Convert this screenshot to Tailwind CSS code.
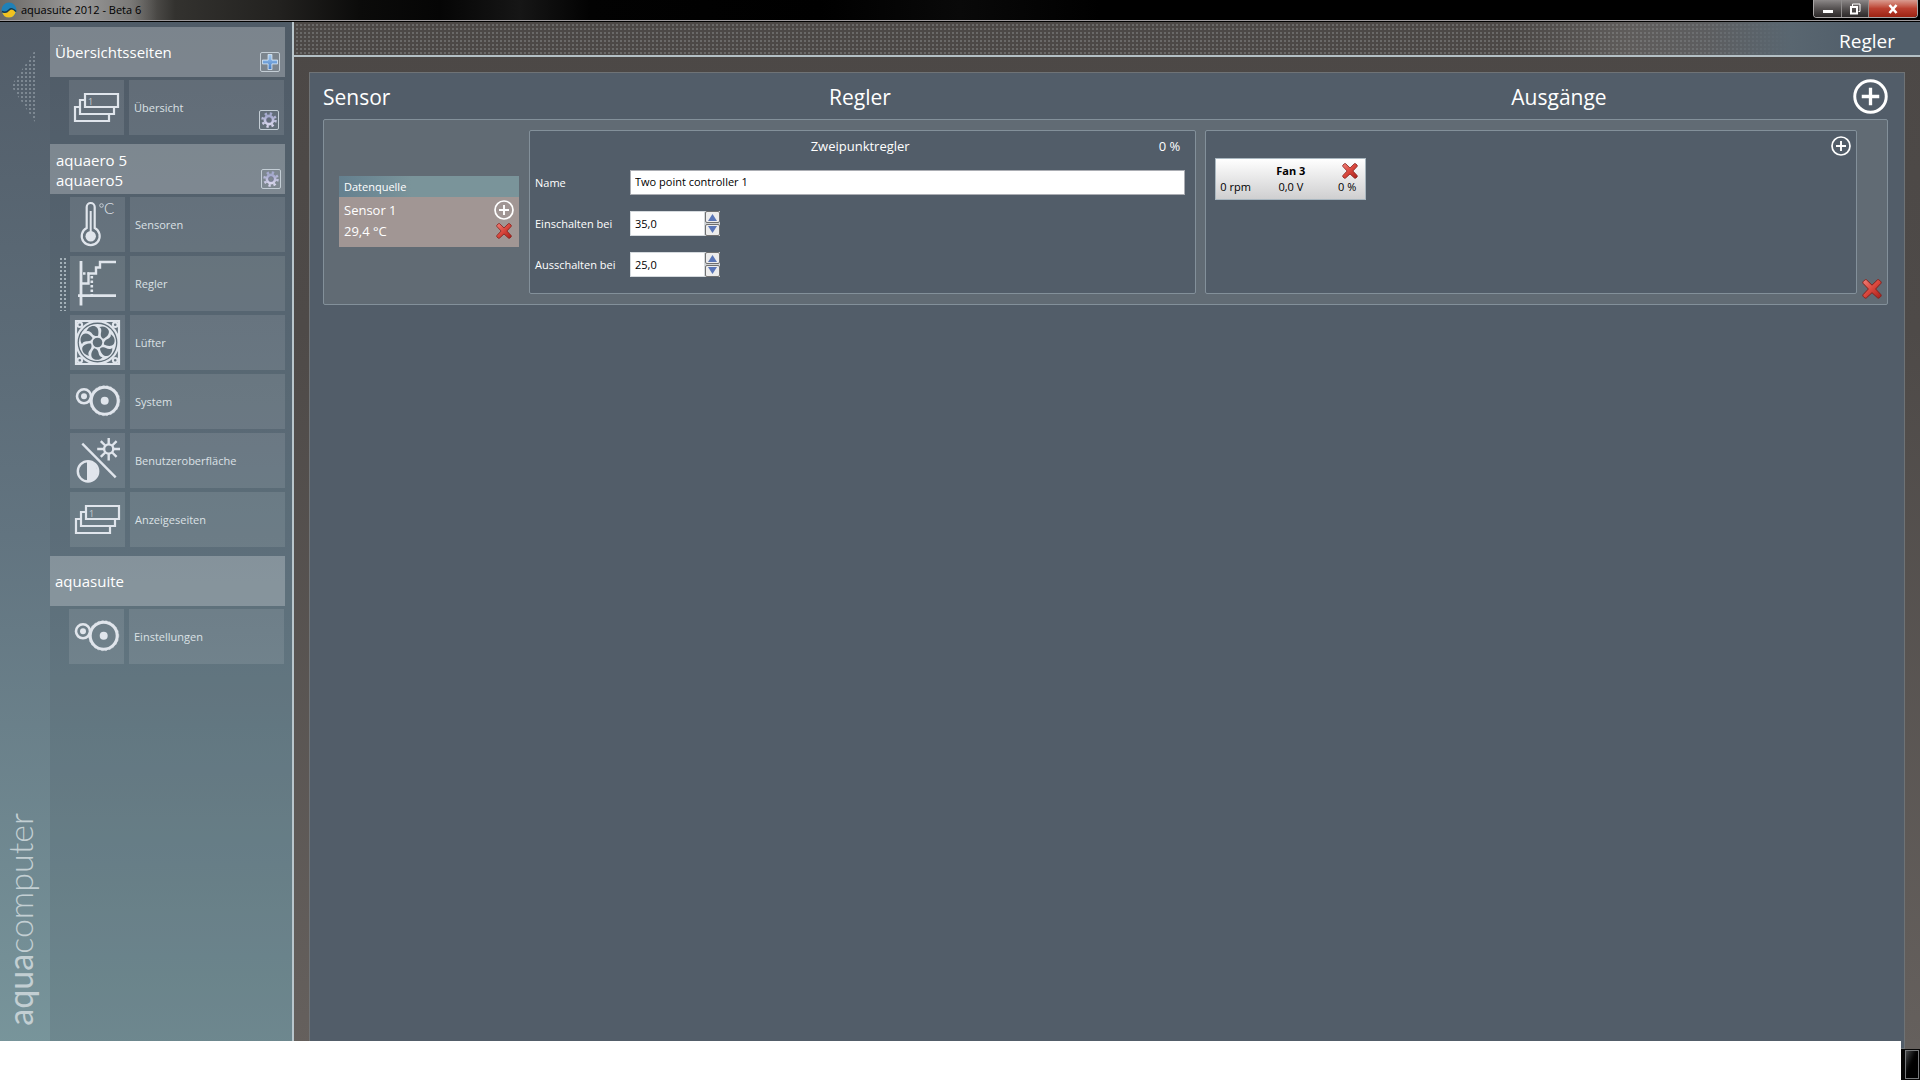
<!DOCTYPE html>
<html lang="de">
<head>
<meta charset="utf-8">
<meta name="viewport" content="width=device-width, initial-scale=1">
<title>aquasuite 2012 - Beta 6</title>
<script src="https://cdn.jsdelivr.net/npm/@tailwindcss/browser@4"></script>
</head>
<body class="relative flex min-h-screen flex-col bg-black font-['Open_Sans','Noto_Sans',sans-serif] text-[11px] leading-4 text-white">

<!-- shared symbols -->
<svg class="absolute size-0" aria-hidden="true">
  <defs>
    <pattern id="dots-bar" width="4" height="4" patternUnits="userSpaceOnUse"><rect x="2" y="2" width="2" height="2" fill="#6a6968"/></pattern>
    <pattern id="dots-arrow" width="4" height="4" patternUnits="userSpaceOnUse"><rect x="2" y="2" width="2" height="2" fill="#7d8892"/></pattern>
    <pattern id="dots-mark" width="4" height="4" patternUnits="userSpaceOnUse"><rect x="0" y="0" width="2" height="2" fill="#a3b0b8"/></pattern>
    <linearGradient id="red" x1="0" y1="0" x2="1" y2="1"><stop offset="0" stop-color="#f08078"/><stop offset=".5" stop-color="#d8463c"/><stop offset="1" stop-color="#a81f1a"/></linearGradient>
    <linearGradient id="blue" x1="0" y1="0" x2="0" y2="1"><stop offset="0" stop-color="#a5ccf2"/><stop offset="1" stop-color="#4179c2"/></linearGradient>
    <linearGradient id="steel" x1="0" y1="0" x2="0" y2="1"><stop offset="0" stop-color="#a3a8cc"/><stop offset="1" stop-color="#d5d3ea"/></linearGradient>
    <symbol id="cross" viewBox="0 0 20 20"><path d="M4.500 .8 10 6.200 15.500 .8Q16.500 .3 17.400 1.200L18.800 2.600Q19.600 3.600 18.800 4.500L13.600 10 18.800 15.500Q19.600 16.400 18.800 17.400L17.400 18.800Q16.500 19.600 15.500 18.800L10 13.700 4.500 18.800Q3.500 19.600 2.600 18.800L1.200 17.400Q.4 16.400 1.200 15.500L6.400 10 1.200 4.500Q.4 3.600 1.200 2.600L2.600 1.200Q3.500 .3 4.500 .8Z" fill="url(#red)" stroke="#84201c" stroke-width="1"/></symbol>
    <symbol id="add" viewBox="0 0 20 20"><circle cx="10" cy="10" r="9" fill="none" stroke="#fff" stroke-width="1.700"/><path d="M10 5v10M5 10h10" stroke="#fff" stroke-width="1.900"/></symbol>
    <symbol id="plus" viewBox="0 0 20 20"><path d="M7.600 .5h4.800v7.100h7.100v4.800h-7.100v7.100H7.600v-7.100H.5V7.600h7.100z" fill="url(#blue)" stroke="#e3f0fb" stroke-width="1"/></symbol>
    <symbol id="gear" viewBox="0 0 20 20"><g fill="none" stroke="url(#steel)"><circle cx="10" cy="10" r="5" stroke-width="3.600"/><circle cx="10" cy="10" r="8.100" stroke-width="3.200" stroke-dasharray="2.900 3.461"/></g><circle cx="10" cy="10" r="3.200" fill="none" stroke="#6d7090" stroke-width=".7"/></symbol>
    <symbol id="pages" viewBox="0 0 55 55"><path d="M15 20h-4v14h34v-6M10 27H6v14h34v-7M16 14h33v13H16z" fill="none" stroke="#e0e5ec" stroke-width="2.200"/><text x="19" y="25" font-size="9" fill="#c3cad1">1</text></symbol>
    <symbol id="wheels" viewBox="0 0 55 55"><g fill="none" stroke="#e0e5ec"><circle cx="34.700" cy="26.700" r="13.500" stroke-width="3"/><circle cx="14" cy="22.300" r="7" stroke-width="2.600"/><circle cx="34.700" cy="26.700" r="15" stroke-width=".6" stroke-dasharray="2 2"/></g><g fill="#e0e5ec"><circle cx="34.700" cy="26.700" r="4"/><circle cx="14" cy="22.300" r="3"/></g></symbol>
  </defs>
</svg>

<!-- title bar -->
<header class="flex h-[22px] items-start border-b border-black bg-[linear-gradient(90deg,#6b6966_0,#6b6966_130px,#33322f_175px,#22211f_280px,#0b0b0a_360px,#050505_440px,#161616_520px,#020202_590px,#000_820px,#090909_960px,#000_1100px,#000_100%)]">
  <div class="flex h-[21px] flex-1 items-center border-b border-[#9c999c]">
    <div class="flex h-[20px] items-center gap-1 bg-linear-to-r from-transparent via-[#9a9a9a] via-50% to-transparent pr-4 pl-px">
      <svg class="size-4" viewBox="0 0 16 16" aria-hidden="true"><circle cx="8" cy="8" r="7.500" fill="#1f81b8"/><path d="M1 10Q4 12.500 8 8.500 11 5.500 14.800 10 13 15.500 8 15.500 2.500 15.500 1 10Z" fill="#f2c21f"/><path d="M1 9.500Q5 11.500 8 8 11 5 15 9.500" fill="none" stroke="#17384a" stroke-width="1.500"/></svg>
      <h1 class="text-[11px] text-black">aquasuite 2012 - Beta 6</h1>
    </div>
    <div class="mr-[2px] ml-auto flex h-[18px] self-start overflow-hidden rounded-b border border-t-0 border-[#a9a6a6] text-white">
      <button aria-label="Minimieren" class="flex w-7 items-center justify-center border-r border-[#8f8c8c] bg-linear-to-b from-[#8c8888] via-[#565252] via-50% to-[#2c2929]"><svg class="size-3" viewBox="0 0 12 12"><path d="M1 7h10v3H1z" fill="#fff"/></svg></button>
      <button aria-label="Wiederherstellen" class="flex w-[27px] items-center justify-center border-r border-[#8f8c8c] bg-linear-to-b from-[#8c8888] via-[#565252] via-50% to-[#2c2929]"><svg class="size-3" viewBox="0 0 12 12" fill="none" stroke="#fff"><path d="M3.500 3V1h7.500v7.500H9.500"/><path d="M2 4h6v6.500H2z" stroke-width="2"/></svg></button>
      <button aria-label="Schließen" class="flex w-[48px] items-center justify-center bg-linear-to-b from-[#d99b90] via-[#bb4030] via-50% to-[#9c2312]"><svg class="size-3" viewBox="0 0 12 12"><path d="M2.500 2 9.500 10M9.500 2 2.500 10" stroke="#fff" stroke-width="2.600"/></svg></button>
    </div>
  </div>
</header>

<div class="flex flex-1">
  <!-- side bar -->
  <aside class="flex w-[294px] shrink-0 border-r-2 border-[#b9c6cc] bg-linear-to-b from-[#525d69] via-[#627480] via-50% to-[#78959b]">
    <div class="flex w-[50px] shrink-0 flex-col justify-between pt-7 pb-[23px] pl-1">
      <button aria-label="Seitenleiste einklappen" class="ml-[7px] self-start"><svg class="h-[72px] w-6" viewBox="0 0 24 72"><path d="M24 0v72L0 36z" fill="url(#dots-arrow)"/></svg></button>
      <p class="rotate-180 self-start font-['Lato',sans-serif] text-[34px] leading-8 font-light text-[#c3cfd3] [writing-mode:vertical-rl]"><span class="font-normal">aqua</span>computer</p>
    </div>
    <nav class="flex flex-1 flex-col gap-[9px] bg-[#46535e]/20 pt-[5px] pr-[7px]">
      <section>
        <div class="flex h-[50px] items-center justify-between bg-white/25 px-[5px]">
          <h2 class="text-[15px] leading-5">Übersichtsseiten</h2>
          <button aria-label="Seite hinzufügen" class="mb-[5px] size-5 self-end rounded-xs border border-[#c3cdd5] p-px"><svg class="size-4"><use href="#plus"/></svg></button>
        </div>
        <div class="mt-[3px] mr-px ml-[19px] flex h-[55px] gap-[5px]">
          <a href="#uebersicht" class="bg-white/10" aria-label="Übersicht öffnen"><svg class="size-[55px]"><use href="#pages"/></svg></a>
          <div class="flex flex-1 items-center justify-between bg-white/10 px-[5px] text-[#dbe1e5]"><a href="#uebersicht">Übersicht</a>
            <button aria-label="Übersicht einstellen" class="mb-[5px] size-5 self-end rounded-xs border border-[#c3cdd5] p-px"><svg class="size-4"><use href="#gear"/></svg></button></div>
        </div>
      </section>

      <section>
        <div class="flex h-[50px] items-center justify-between bg-white/25 pr-1 pl-[6px]">
          <h2 class="pt-px text-[15px] leading-5">aquaero 5<br>aquaero5</h2>
          <button aria-label="aquaero 5 einstellen" class="mb-[5px] size-5 self-end rounded-xs border border-[#c3cdd5] p-px"><svg class="size-4"><use href="#gear"/></svg></button>
        </div>
        <ul class="mt-[3px] flex flex-col gap-1 text-[#dbe1e5]">
          <li><a href="#sensoren" class="ml-5 flex h-[55px] gap-[5px]">
            <svg class="size-[55px] bg-white/10" viewBox="0 0 55 55" aria-hidden="true"><path d="M16.700 31V10a4 4 0 0 1 8 0v21a9 9 0 1 1-8 0Z" fill="none" stroke="#e0e5ec" stroke-width="2.200"/><circle cx="20.700" cy="39.300" r="5.200" fill="#e0e5ec"/><path d="M20.700 14v24" stroke="#e0e5ec" stroke-width="2"/><circle cx="31.500" cy="8.500" r="1.800" fill="none" stroke="#cfd6dc" stroke-width=".9"/><text x="34" y="17" font-family="Lato" font-weight="300" font-size="15" fill="#e0e5ec">C</text></svg>
            <span class="flex flex-1 items-center bg-white/10 pl-[5px]">Sensoren</span></a></li>
          <li class="flex"><svg class="mt-[2px] ml-[10px] h-[53px] w-[6px] shrink-0" aria-hidden="true"><rect width="6" height="53" fill="url(#dots-mark)"/></svg>
            <a href="#regler" aria-current="page" class="ml-1 flex h-[55px] flex-1 gap-[5px]">
            <svg class="size-[55px] bg-white/10" viewBox="0 0 55 55" aria-hidden="true" fill="none" stroke="#e0e5ec"><path d="M11 5v44.500M8 39.700h38" stroke-width="2.800"/><path d="M12 27.500h6.500V17.500H26V11.500h4V6h16" stroke-width="2.400"/><path d="M13 17.500h6M21.800 20v21" stroke-width="2.600" stroke-dasharray="2.500 2"/></svg>
            <span class="flex flex-1 items-center bg-white/10 pl-[5px]">Regler</span></a></li>
          <li><a href="#luefter" class="ml-5 flex h-[55px] gap-[5px]">
            <svg class="size-[55px] bg-white/10" viewBox="0 0 55 55" aria-hidden="true"><path d="M6 6h43v43H6z" fill="none" stroke="#e0e5ec" stroke-width="2.200"/><circle cx="27.500" cy="27.500" r="21" fill="#606e78" stroke="#e0e5ec" stroke-width="2.200"/><circle cx="27.500" cy="27.500" r="18.600" fill="#e0e5ec"/><g fill="none" stroke="#e0e5ec" stroke-width="2"><circle cx="9.800" cy="9.800" r="2.300"/><circle cx="45.200" cy="9.800" r="2.300"/><circle cx="9.800" cy="45.200" r="2.300"/><circle cx="45.200" cy="45.200" r="2.300"/></g>
              <g fill="#606e78"><circle cx="27.500" cy="27.500" r="4.800"/><path id="blade" d="M28 20.800C29 17 28.500 12.500 25 11.200 21 10.200 17.500 13 16.500 16.500 18.500 15.200 21 17 22.300 19 23.800 20.800 26 21.500 28 20.800Z"/><use href="#blade" transform="rotate(51.430 27.500 27.500)"/><use href="#blade" transform="rotate(102.860 27.500 27.500)"/><use href="#blade" transform="rotate(154.290 27.500 27.500)"/><use href="#blade" transform="rotate(205.720 27.500 27.500)"/><use href="#blade" transform="rotate(257.150 27.500 27.500)"/><use href="#blade" transform="rotate(308.580 27.500 27.500)"/></g></svg>
            <span class="flex flex-1 items-center bg-white/10 pl-[5px]">Lüfter</span></a></li>
          <li><a href="#system" class="ml-5 flex h-[55px] gap-[5px]">
            <svg class="size-[55px] bg-white/10" aria-hidden="true"><use href="#wheels"/></svg>
            <span class="flex flex-1 items-center bg-white/10 pl-[5px]">System</span></a></li>
          <li><a href="#benutzeroberflaeche" class="ml-5 flex h-[55px] gap-[5px]">
            <svg class="size-[55px] bg-white/10" viewBox="0 0 55 55" aria-hidden="true" fill="none" stroke="#e0e5ec" stroke-width="2.400"><path d="M12.300 10.700 45.700 44.300"/><circle cx="38.700" cy="16" r="4.600"/><path d="M38.700 11V5M38.700 21v6.500M33.700 16h-6.500M43.700 16h6.300M35.200 12.500l-4.400-4.400M42.200 12.500l4.400-4.400M35.200 19.500l-4.400 4.400M42.200 19.500l4.400 4.400"/><circle cx="18" cy="38.300" r="10.200"/><path d="M17 28v21a10.500 10.500 0 0 0 0-21z" fill="#e0e5ec" stroke="none"/></svg>
            <span class="flex flex-1 items-center bg-white/10 pl-[5px]">Benutzeroberfläche</span></a></li>
          <li><a href="#anzeigeseiten" class="ml-5 flex h-[55px] gap-[5px]">
            <svg class="size-[55px] bg-white/10" aria-hidden="true"><use href="#pages"/></svg>
            <span class="flex flex-1 items-center bg-white/10 pl-[5px]">Anzeigeseiten</span></a></li>
        </ul>
      </section>

      <section>
        <div class="flex h-[50px] items-center bg-white/25 pl-[5px]"><h2 class="text-[15px] leading-5">aquasuite</h2></div>
        <a href="#einstellungen" class="mt-[3px] mr-px ml-[19px] flex h-[55px] gap-[5px] text-[#dbe1e5]">
          <svg class="size-[55px] bg-white/10" aria-hidden="true"><use href="#wheels"/></svg>
          <span class="flex flex-1 items-center bg-white/10 pl-[5px]">Einstellungen</span></a>
      </section>
    </nav>
  </aside>

  <!-- page -->
  <main class="flex min-w-0 flex-1 flex-col bg-linear-to-b from-[#4c4846] via-[#4e4a48] via-30% to-[#65605d]">
    <div class="relative h-[35px] border-b-2 border-[#b4c0c5]">
      <svg class="absolute inset-0 size-full" aria-hidden="true"><rect width="100%" height="100%" fill="url(#dots-bar)"/></svg>
      <div class="relative flex h-full items-center justify-end bg-[linear-gradient(90deg,transparent_75%,#8a8a8a4d_82%,#6d737980_87%,#596670_92%,#525f6b_96%)] pr-[25px]">
        <h2 class="pt-1 text-[19px] leading-6">Regler</h2>
      </div>
    </div>

    <div class="mx-[15px] mt-[15px] flex-1 border border-[#6f7376] bg-[#525d69] pr-4 pl-[13px]">
      <div class="grid h-[46px] grid-cols-[206px_1fr_1fr_35px] items-center text-[21px] leading-7">
        <h3 class="pt-px">Sensor</h3>
        <h3 class="pt-px text-center">Regler</h3>
        <h3 class="pt-px pl-[74px] text-center">Ausgänge</h3>
        <button aria-label="Regler hinzufügen"><svg class="size-[35px]"><use href="#add"/></svg></button>
      </div>

      <section class="flex items-start rounded-xs border border-[#83909a] bg-[#616b74] pt-[10px] pb-[5px] pl-[15px]">
        <div class="mr-[10px] w-[180px] shrink-0 pt-[46px]">
          <h4 class="flex h-[21px] items-center bg-linear-to-r from-[#64808f] to-[#7a949a] to-40% pt-px pl-[5px]">Datenquelle</h4>
          <div class="flex h-[50px] justify-between bg-[#a19694] px-[5px] pt-[3px] text-[13px] leading-[21px]">
            <p>Sensor 1<br>29,4 °C</p>
            <div class="flex flex-col items-center gap-[3px]">
              <button aria-label="Datenquelle wählen"><svg class="size-5"><use href="#add"/></svg></button>
              <button aria-label="Datenquelle entfernen"><svg class="size-4"><use href="#cross"/></svg></button>
            </div>
          </div>
        </div>

        <form class="mr-[9px] mb-[5px] h-[164px] min-w-0 flex-[667] rounded-xs border border-[#83909a] bg-[#525d69] pr-[10px] pl-[5px]">
          <div class="grid h-[39px] grid-cols-[1fr_auto_1fr] items-start px-[5px] pt-[5px] text-[13px] leading-5">
            <h4 class="col-start-2">Zweipunktregler</h4>
            <output class="text-right">0 %</output>
          </div>
          <div class="grid grid-cols-[95px_1fr] items-center gap-y-4">
            <label for="name">Name</label>
            <input id="name" value="Two point controller 1" class="h-[25px] w-full border border-[#abadb3] bg-white px-1 pb-[2px] text-black">
            <label for="on">Einschalten bei</label>
            <div class="flex h-[25px] w-[90px]">
              <input id="on" value="35,0" class="min-w-0 flex-1 border border-[#d5dade] bg-white px-1 text-black">
              <div class="flex w-[15px] flex-col gap-px bg-[#d0d3d6]">
                <button type="button" aria-label="Einschaltwert erhöhen" class="flex h-3 items-center justify-center rounded-xs border border-[#707070] bg-[#ececec]"><svg class="h-2 w-[11px]" viewBox="0 0 11 8"><path d="M1 8h9L5.500 1z" fill="#5a76b8"/></svg></button>
                <button type="button" aria-label="Einschaltwert verringern" class="flex h-3 items-center justify-center rounded-xs border border-[#707070] bg-[#ececec]"><svg class="h-2 w-[11px]" viewBox="0 0 11 8"><path d="M1 0h9L5.500 7z" fill="#5a76b8"/></svg></button>
              </div>
            </div>
            <label for="off">Ausschalten bei</label>
            <div class="flex h-[25px] w-[90px]">
              <input id="off" value="25,0" class="min-w-0 flex-1 border border-[#d5dade] bg-white px-1 text-black">
              <div class="flex w-[15px] flex-col gap-px bg-[#d0d3d6]">
                <button type="button" aria-label="Ausschaltwert erhöhen" class="flex h-3 items-center justify-center rounded-xs border border-[#707070] bg-[#ececec]"><svg class="h-2 w-[11px]" viewBox="0 0 11 8"><path d="M1 8h9L5.500 1z" fill="#5a76b8"/></svg></button>
                <button type="button" aria-label="Ausschaltwert verringern" class="flex h-3 items-center justify-center rounded-xs border border-[#707070] bg-[#ececec]"><svg class="h-2 w-[11px]" viewBox="0 0 11 8"><path d="M1 0h9L5.500 7z" fill="#5a76b8"/></svg></button>
              </div>
            </div>
          </div>
        </form>

        <div class="mb-[5px] flex h-[164px] min-w-0 flex-[652] items-start justify-between rounded-xs border border-[#83909a] bg-[#525d69] pt-[5px] pr-[5px] pl-[9px]">
          <article class="mt-[22px] grid h-[42px] w-[151px] grid-cols-3 content-center border border-[#a9b7c0] bg-linear-to-b from-white to-[#cfcfd0] px-1 text-black">
            <h4 class="col-start-2 text-center font-bold">Fan 3</h4>
            <button aria-label="Fan 3 entfernen" class="justify-self-end pr-[3px]"><svg class="size-4"><use href="#cross"/></svg></button>
            <p>0 rpm</p><p class="text-center">0,0 V</p><p class="pr-[5px] text-right">0 %</p>
          </article>
          <button aria-label="Ausgang hinzufügen"><svg class="size-5"><use href="#add"/></svg></button>
        </div>

        <div class="flex w-[30px] shrink-0 justify-center self-end">
          <button aria-label="Regler entfernen"><svg class="size-5"><use href="#cross"/></svg></button>
        </div>
      </section>
    </div>
  </main>
</div>

<!-- task bar with the white surface lying over it -->
<footer class="flex h-[31px] justify-end bg-[#050505] p-px">
  <div class="w-[14px] border border-[#77797b] bg-linear-to-br from-[#4a4c4e] to-black to-60%"></div>
</footer>
<div class="absolute right-[19px] bottom-0 left-0 h-[39px] bg-white"></div>
</body>
</html>
